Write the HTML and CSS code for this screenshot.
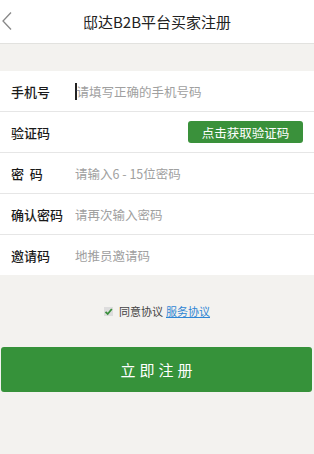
FILE: index.html
```html
<!DOCTYPE html>
<html lang="zh">
<head>
<meta charset="utf-8">
<link rel="stylesheet" href="styles.css">
</head>
<body>
<header class="topbar">
  <span class="back"><svg width="12" height="20" viewBox="0 0 12 20"><path d="M10 1.5 L2 10 L10 18.5" fill="none" stroke="#888" stroke-width="1.3"/></svg></span>
  <h1 class="title">邸达B2B平台买家注册</h1>
</header>
<div class="spacer"></div>
<section class="form">
  <div class="row"><span class="label">手机号</span><span class="field"><span class="cursor"></span>请填写正确的手机号码</span></div>
  <div class="row"><span class="label">验证码</span><span class="field"></span><span class="code-btn">点击获取验证码</span></div>
  <div class="row"><span class="label">密&nbsp;&nbsp;码</span><span class="field">请输入6 - 15位密码</span></div>
  <div class="row"><span class="label">确认密码</span><span class="field">请再次输入密码</span></div>
  <div class="row"><span class="label">邀请码</span><span class="field">地推员邀请码</span></div>
</section>
<div class="agree">
  <span class="check"><svg width="9" height="9" viewBox="0 0 9 9"><path d="M1.5 4.8 L3.7 7 L7.8 2" fill="none" stroke="#3a8f3c" stroke-width="1.8"/></svg></span>
  <span class="agree-text">同意协议</span><a class="link">服务协议</a>
</div>
<div class="submit">立即注册</div>
</body>
</html>
```
FILE: styles.css
```css
html, body {
  margin: 0;
  padding: 0;
  background: #f3f2ef;
  font-family: "Noto Sans CJK SC", "Noto Sans", sans-serif;
}
.topbar {
  height: 43px;
  background: #fff;
  border-bottom: 1px solid #e2e2df;
  display: flex;
  align-items: center;
  justify-content: center;
  position: relative;
}
.back {
  position: absolute;
  left: 1px;
  top: 11px;
  line-height: 0;
}
.title {
  margin: 0;
  font-size: 15px;
  font-weight: normal;
  color: #222;
}
.spacer {
  height: 27px;
}
.form {
  background: #fff;
}
.row {
  height: 40px;
  display: flex;
  align-items: center;
  border-top: 1px solid #e6e6e6;
  padding: 0 11px;
}
.row:first-child {
  border-top: none;
}
.label {
  width: 64px;
  font-size: 13px;
  font-weight: 500;
  color: #1a1a1a;
}
.field {
  flex: 1;
  font-size: 12.5px;
  color: #a0a0a0;
  display: flex;
  align-items: center;
  white-space: pre;
}
.cursor {
  display: inline-block;
  width: 1.5px;
  height: 17px;
  background: #222;
}
.code-btn {
  width: 115px;
  height: 22px;
  background: #3a913b;
  border-radius: 3px;
  color: #fff;
  font-size: 12.5px;
  display: flex;
  align-items: center;
  justify-content: center;
}
.agree {
  height: 36px;
  margin-top: 18px;
  display: flex;
  align-items: center;
  justify-content: center;
  font-size: 11px;
  color: #444;
}
.check {
  width: 9px;
  height: 9px;
  background: #ddd;
  display: inline-flex;
  line-height: 0;
  margin-right: 6px;
}
.link {
  color: #2f86d4;
  text-decoration: underline;
  margin-left: 3px;
}
.submit {
  margin: 18px 2px 0 1px;
  height: 45px;
  background: #36923a;
  border-radius: 3px;
  color: #fff;
  font-size: 15px;
  letter-spacing: 4px;
  display: flex;
  align-items: center;
  justify-content: center;
  padding-left: 4px;
}
```
